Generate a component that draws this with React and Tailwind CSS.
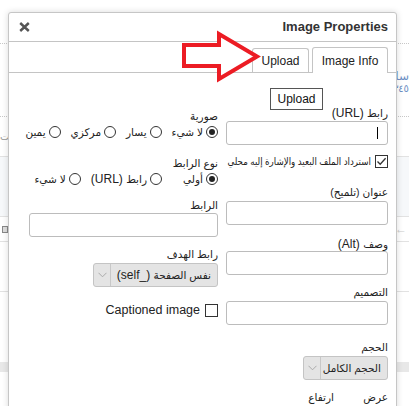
import React from "react";

const FONT = { fontFamily: '"Liberation Sans", "DejaVu Sans", Arial, sans-serif' };

function Ar({ children, className = "" }) {
  return <span className={"text-[10.5px] " + className}>{children}</span>;
}

function Radio({ checked }) {
  return (
    <span className="relative flex h-[12px] w-[12px] shrink-0 items-center justify-center rounded-full border border-[#333] bg-white">
      {checked ? <span className="h-[6px] w-[6px] rounded-full bg-[#222]" /> : null}
    </span>
  );
}

function Check({ checked }) {
  return (
    <span className="flex h-[13px] w-[13px] shrink-0 items-center justify-center border border-[#333] bg-white">
      {checked ? (
        <svg width="11" height="11" viewBox="0 0 11 11">
          <path d="M1.5 5.5 L4.2 8.3 L9.6 2.2" fill="none" stroke="#333" strokeWidth="1.3" />
        </svg>
      ) : null}
    </span>
  );
}

function Label({ children, className = "" }) {
  return <div className={"whitespace-nowrap text-[12px] leading-[14px] text-[#222] " + className}>{children}</div>;
}

function Input({ className = "", children }) {
  return (
    <div className={"flex h-[24px] w-full items-center rounded-[3px] border border-[#bcbcbc] bg-white " + className}>
      {children}
    </div>
  );
}

function Select({ children, className = "" }) {
  return (
    <div className={"flex h-[24px] items-center rounded-[3px] border border-[#c4c4c4] bg-[#e4e4e4] " + className}>
      <div className="flex-1 whitespace-nowrap pr-[6px] text-[12px] leading-[14px] text-[#222]">{children}</div>
      <div className="flex h-full w-[17px] shrink-0 items-center justify-center border-r border-[#c8c8c8]">
        <svg width="9" height="6" viewBox="0 0 9 6">
          <path d="M0.5 0.8 L4.5 4.8 L8.5 0.8" fill="none" stroke="#aaa" strokeWidth="1" />
        </svg>
      </div>
    </div>
  );
}

function Opt({ checked, children, className = "" }) {
  return (
    <div className={"flex shrink-0 items-center gap-[3px] " + className}>
      <Radio checked={checked} />
      <span className="whitespace-nowrap text-[12px] leading-[14px] text-[#222]">{children}</span>
    </div>
  );
}

export default function App() {
  return (
    <div className="relative h-[406px] w-[409px] overflow-hidden bg-white" style={FONT}>
      {/* page behind the dialog */}
      <div className="flex flex-col">
        <div className="h-[44px] border-b border-dotted border-[#c8c8c8]" />
        <div className="flex h-[73px] flex-col items-end border-b border-dotted border-[#c8c8c8] pt-[26px]">
          <span className="text-[12px] leading-[12px] text-[#6d8fc4]">ساليب</span>
          <span className="mt-[2px] text-[10px] leading-[10px] text-[#6d8fc4]">٣٤٥</span>
        </div>
        <div className="flex h-[40px] items-center border-b border-[#e2e2e2]">
          <span className="text-[10px] text-[#999]">ت</span>
        </div>
        <div className="h-[60px] border-b border-[#e2e2e2] bg-[#f6f8fa]" />
        <div className="flex h-[25px] items-center justify-between border-b border-[#e2e2e2] px-[2px]">
          <span className="h-[7px] w-[6px] border border-[#888] bg-[#ddd]" />
          <span className="text-[12px] text-[#ccc]">←</span>
        </div>
        <div className="h-[50px] border-b border-[#e2e2e2]" />
        <div className="h-[70px]" />
        <div className="h-[10px] bg-[#e8e8e8]" />
      </div>

      {/* dialog */}
      <div className="absolute left-[8px] top-[12px] h-[420px] w-[389px] rounded-t-[3px] border border-[#c6c6c6] bg-white shadow-[0_0_6px_rgba(0,0,0,0.15)]">
        <div className="flex h-[29px] items-center justify-between border-b border-[#c4c4c4] pl-[10px] pr-[8px]">
          <svg width="11" height="10" viewBox="0 0 11 10">
            <path d="M1.2 1 L9.8 9 M9.8 1 L1.2 9" stroke="#555" strokeWidth="2.4" />
          </svg>
          <span className="text-[13px] font-bold leading-[16px] text-[#333]">Image Properties</span>
        </div>
        <div className="flex h-[31px] items-end justify-end gap-[3px] border-b border-[#c4c4c4] pr-[8px]">
          <div className="flex h-[24px] w-[57px] items-center justify-center rounded-t-[3px] border border-b-0 border-[#c4c4c4] bg-white pt-[1px] text-[12px] text-[#222]">
            Upload
          </div>
          <div className="-mb-[1px] flex h-[26px] w-[76px] items-center justify-center rounded-t-[3px] border border-b-0 border-[#c4c4c4] bg-white text-[12px] text-[#222]">
            Image Info
          </div>
        </div>

        <div dir="rtl" className="flex gap-[8px] pl-[20px] pr-[8px]">
          {/* right column */}
          <div className="flex w-[162px] min-w-0 shrink-0 flex-col">
            <div className="mt-[15px] flex items-start justify-between">
              <Label className="mt-[18px]"><Ar>رابط</Ar> (URL)</Label>
              <div className="ml-[44px] flex h-[22px] w-[53px] items-center justify-center border border-[#555] bg-white text-[12px] text-[#111]">
                Upload
              </div>
            </div>
            <Input className="mt-[1px]">
              <span className="mr-[9px] h-[12px] w-[1px] bg-black" />
            </Input>
            <div className="mt-[10px] flex items-start gap-[4px]">
              <Check checked />
              <span className="inline-block origin-right scale-x-[0.87] whitespace-nowrap text-[10px] leading-[14px] text-[#222]">
                استرداد الملف البعيد والإشارة إليه محلي
              </span>
            </div>
            <Label className="mt-[16px]"><Ar>عنوان (تلميح)</Ar></Label>
            <Input className="mt-[2px]" />
            <Label className="mt-[12px]"><Ar>وصف</Ar> (Alt)</Label>
            <Input />
            <Label className="mt-[10px]"><Ar>التصميم</Ar></Label>
            <Input className="mt-[2px]" />
            <Label className="mt-[15px]"><Ar>الحجم</Ar></Label>
            <Select className="mt-[2px] w-[85px]"><Ar>الحجم الكامل</Ar></Select>
            <div className="mt-[10px] flex">
              <Label className="w-[54px]"><Ar>عرض</Ar></Label>
              <Label><Ar>ارتفاع</Ar></Label>
            </div>
          </div>

          {/* left column */}
          <div className="flex w-[189px] min-w-0 shrink-0 flex-col">
            <Label className="mt-[36px]"><Ar>صورية</Ar></Label>
            <div className="mt-[2px] flex h-[14px] items-center gap-[10px]">
              <Opt checked><Ar>لا شيء</Ar></Opt>
              <Opt><Ar>يسار</Ar></Opt>
              <Opt><Ar>مركزي</Ar></Opt>
              <Opt><Ar>يمين</Ar></Opt>
            </div>
            <Label className="mt-[17px]"><Ar>نوع الرابط</Ar></Label>
            <div className="mt-[2px] flex h-[14px] items-center gap-[10px]">
              <Opt checked className="ml-[11px]"><Ar>أولي</Ar></Opt>
              <Opt><Ar>رابط</Ar> (URL)</Opt>
              <Opt><Ar>لا شيء</Ar></Opt>
            </div>
            <Label className="mt-[12px]"><Ar>الرابط</Ar></Label>
            <Input className="mt-[1px]" />
            <Label className="mt-[10px]"><Ar>رابط الهدف</Ar></Label>
            <Select className="mt-[2px] w-[125px]"><Ar>نفس الصفحة</Ar> (_self)</Select>
            <div className="mt-[16px] flex items-center gap-[5px]">
              <Check />
              <span className="whitespace-nowrap text-[12.5px] leading-[15px] text-[#222]">Captioned image</span>
            </div>
          </div>
        </div>
      </div>

      {/* red arrow annotation */}
      <svg className="absolute left-[178px] top-[28px]" width="86" height="58" viewBox="0 0 86 58">
        <polygon
          points="6,17 41,17 41,6 79,28.5 41,51 41,38 6,38"
          fill="white"
          stroke="#ec1c24"
          strokeWidth="4"
          strokeLinejoin="miter"
        />
      </svg>
    </div>
  );
}
